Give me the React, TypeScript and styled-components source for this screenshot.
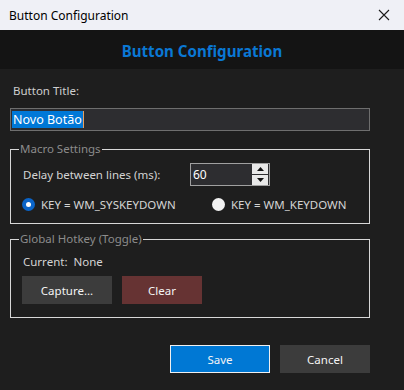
import React from "react";
import styled, { createGlobalStyle } from "styled-components";

const Global = createGlobalStyle`
  html, body { margin: 0; padding: 0; background: #1e1e1e; }
  body { font-family: "Noto Sans", "Open Sans", sans-serif; font-size: 11.5px; }
  * { box-sizing: border-box; }
`;

const Window = styled.div`
  width: 404px;
  height: 390px;
  display: flex;
  flex-direction: column;
  background: #1e1e1e;
  overflow: hidden;
`;

const TitleBar = styled.div`
  height: 30px;
  flex: none;
  background: #eff0f6;
  display: flex;
  align-items: center;
  justify-content: space-between;
  padding: 0 14px 0 9px;
  color: #000;
  font-size: 12px;
`;

const Header = styled.div`
  height: 39px;
  flex: none;
  background: #141414;
  display: flex;
  align-items: center;
  justify-content: center;
  color: #0a78d4;
  font-weight: 700;
  font-size: 15.1px;
  padding-top: 2px;
`;

const Body = styled.div`
  display: flex;
  flex-direction: column;
  padding: 14px 34px 0 10px;
  color: #d4d4d4;
`;

const Label = styled.div`
  padding-left: 3px;
  line-height: 16px;
  height: 16px;
  color: #cfcfcf;
`;

const TextInput = styled.div`
  margin-top: 9px;
  height: 23px;
  border: 1px solid #6e6e6e;
  background: #2d2d30;
  display: flex;
  align-items: center;
  padding-left: 1px;
`;

const Selected = styled.span`
  background: #0078d7;
  color: #fff;
  font-size: 12.5px;
  line-height: 17px;
  padding: 0 1px;
  border-right: 1px solid #e8a060;
`;

const Group = styled.fieldset<{ $mt: number; $h: number }>`
  margin: ${(p) => p.$mt}px 0 0 0;
  height: ${(p) => p.$h}px;
  border: 1px solid #d8d8d8;
  padding: 0 0 0 11px;
  min-width: 0;
  display: flex;
  flex-direction: column;
`;

const Legend = styled.legend`
  color: #8c8c8c;
  padding: 0 1px;
  margin-left: -3px;
  font-size: 11.5px;
  line-height: 16px;
`;

const Row = styled.div<{ $mt: number }>`
  display: flex;
  align-items: center;
  margin-top: ${(p) => p.$mt}px;
`;

const DelayLabel = styled.span`
  width: 168px;
  padding-left: 1px;
`;

const Spinner = styled.div`
  width: 80px;
  height: 23px;
  border: 1px solid #a0a0a0;
  background: #2d2d30;
  display: flex;
  align-items: center;
  justify-content: space-between;
  padding-left: 2px;
  color: #fff;
  font-size: 12px;
`;

const SpinButtons = styled.div`
  width: 16px;
  height: 21px;
  display: flex;
  flex-direction: column;
  gap: 1px;
  margin-right: 1px;
`;

const SpinBtn = styled.div`
  flex: 1;
  background: #e8e8e8;
  display: flex;
  align-items: center;
  justify-content: center;
`;

const Radio = styled.label<{ $w?: number }>`
  display: flex;
  align-items: center;
  gap: 6px;
  width: ${(p) => (p.$w ? `${p.$w}px` : "auto")};
`;

const Circle = styled.span<{ $on?: boolean }>`
  width: 13px;
  height: 13px;
  border-radius: 50%;
  background: ${(p) => (p.$on ? "#0a64c8" : "#f2f2f2")};
  display: flex;
  align-items: center;
  justify-content: center;
  &::after {
    content: "";
    width: 5px;
    height: 5px;
    border-radius: 50%;
    background: ${(p) => (p.$on ? "#fff" : "transparent")};
  }
`;

const ButtonRow = styled.div<{ $gap: number; $mt: number; $justify?: string }>`
  display: flex;
  gap: ${(p) => p.$gap}px;
  margin-top: ${(p) => p.$mt}px;
  justify-content: ${(p) => p.$justify || "flex-start"};
`;

const Btn = styled.div<{ $bg: string; $w: number; $border?: boolean }>`
  width: ${(p) => p.$w}px;
  height: 28px;
  background: ${(p) => p.$bg};
  border: ${(p) => (p.$border ? "1px solid #f0f0f0" : "none")};
  color: #f4f4f4;
  display: flex;
  align-items: center;
  justify-content: center;
  font-size: 11.5px;
`;

const Close = () => (
  <svg width="12" height="12" viewBox="0 0 12 12">
    <path d="M1 1 L11 11 M11 1 L1 11" stroke="#1a1a1a" strokeWidth="1.1" />
  </svg>
);

export default function App() {
  return (
    <Window>
      <Global />
      <TitleBar>
        <span>Button Configuration</span>
        <Close />
      </TitleBar>
      <Header>Button Configuration</Header>
      <Body>
        <Label>Button Title:</Label>
        <TextInput>
          <Selected>Novo Botão</Selected>
        </TextInput>
        <Group $mt={10} $h={83}>
          <Legend>Macro Settings</Legend>
          <Row $mt={6}>
            <DelayLabel>Delay between lines (ms):</DelayLabel>
            <Spinner>
              <span>60</span>
              <SpinButtons>
                <SpinBtn>
                  <svg width="7" height="4" viewBox="0 0 7 4"><path d="M3.5 0 L7 4 L0 4 Z" fill="#111" /></svg>
                </SpinBtn>
                <SpinBtn>
                  <svg width="7" height="4" viewBox="0 0 7 4"><path d="M0 0 L7 0 L3.5 4 Z" fill="#111" /></svg>
                </SpinBtn>
              </SpinButtons>
            </Spinner>
          </Row>
          <Row $mt={11}>
            <Radio $w={190}>
              <Circle $on />
              <span>KEY = WM_SYSKEYDOWN</span>
            </Radio>
            <Radio>
              <Circle />
              <span>KEY = WM_KEYDOWN</span>
            </Radio>
          </Row>
        </Group>
        <Group $mt={7} $h={87}>
          <Legend>Global Hotkey (Toggle)</Legend>
          <Row $mt={7}>
            <span style={{ paddingLeft: 1 }}>Current:&nbsp; None</span>
          </Row>
          <ButtonRow $gap={10} $mt={7}>
            <Btn $bg="#3c3c3c" $w={90}>Capture...</Btn>
            <Btn $bg="#663333" $w={80}>Clear</Btn>
          </ButtonRow>
        </Group>
        <ButtonRow $gap={10} $mt={27} $justify="flex-end">
          <Btn $bg="#0078d4" $w={100} $border>Save</Btn>
          <Btn $bg="#3c3c3c" $w={90}>Cancel</Btn>
        </ButtonRow>
      </Body>
    </Window>
  );
}
